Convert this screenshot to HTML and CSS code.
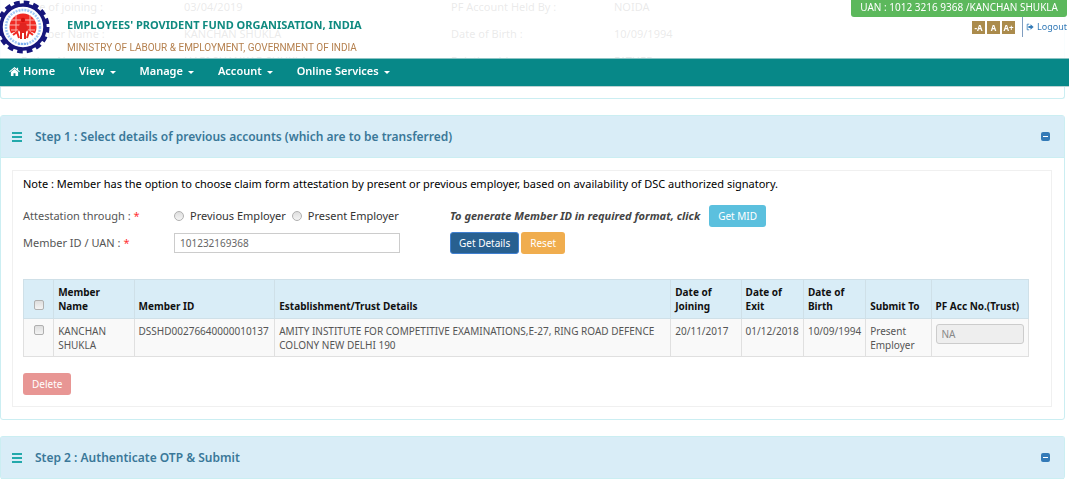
FILE: index.html
```html
<!DOCTYPE html>
<html lang="en">
<head>
    <meta charset="UTF-8">
    <meta name="viewport" content="width=device-width, initial-scale=1.0">
    <title>Transfer Claim | EPFO</title>
    <link rel="stylesheet" href="styles.css">
</head>
<body>
    <header class="site-header">
        <div class="brand-bar">
            <svg class="logo" viewBox="0 0 54 54" aria-label="EPFO">
                <circle cx="27" cy="27" r="24.5" fill="none" stroke="#16167c" stroke-width="4" stroke-dasharray="5.6 4.02"/>
                <circle cx="27" cy="27" r="22" fill="#fff" stroke="#16167c" stroke-width="3.5"/>
                <circle cx="27" cy="27" r="17" fill="none" stroke="#a3caf5" stroke-width="2.5" stroke-dasharray="2 1"/>
                <circle cx="27" cy="27" r="13.5" fill="#f02a24"/>
                <path d="M15 20h24M14 25h26M15 30h24M20 15v17M34 15v17" stroke="#f9b4ae" stroke-width="1" fill="none"/>
                <path d="M14 34q6-4 13-2q7-2 13 2q-4 8-13 8t-13-8z" fill="#fff"/>
                <circle cx="27" cy="20" r="2.2" fill="#d3120f"/>
                <path d="M24 23h6l2 7-2 1v8h-2v-6h-2v6h-2v-8l-2-1z" fill="#e02420"/>
                <path d="M17 35l4-3 2 6M37 35l-4-3-2 6" stroke="#f02a24" stroke-width="2" fill="none"/>
                <path d="M22 44h10" stroke="#7fb0ee" stroke-width="2" stroke-dasharray="2 1"/>
            </svg>
            <div class="brand-text">
                <h1>EMPLOYEES' PROVIDENT FUND ORGANISATION, INDIA</h1>
                <p>MINISTRY OF LABOUR &amp; EMPLOYMENT, GOVERNMENT OF INDIA</p>
            </div>
            <div class="user-area">
                <div class="uan">UAN : 1012 3216 9368 /KANCHAN SHUKLA</div>
                <div class="tools">
                    <button type="button" class="font-btn">-A</button>
                    <button type="button" class="font-btn">A</button>
                    <button type="button" class="font-btn">A+</button>
                    <a href="#" class="logout">
                        <svg width="8" height="8" viewBox="0 0 10 9"><path d="M4 1H1.5v7H4" fill="none" stroke="currentColor"/><path d="M3 3.3h2.6V1L9.6 4.5 5.6 8V5.7H3z" fill="currentColor"/></svg>
                        Logout
                    </a>
                </div>
            </div>
        </div>
        <nav class="main-nav">
            <a href="#"><svg width="11" height="9" viewBox="0 0 12 10"><path d="M6 0l2.6 2.2V.8h1.4v2.6L12 5l-.7.8L6 1.6.7 5.8 0 5z" fill="currentColor"/><path d="M6 2.2l4 3.4V10H7.1V7H4.9v3H2V5.6z" fill="currentColor"/></svg> Home</a>
            <a href="#">View <span class="caret"></span></a>
            <a href="#">Manage <span class="caret"></span></a>
            <a href="#">Account <span class="caret"></span></a>
            <a href="#">Online Services <span class="caret"></span></a>
        </nav>
    </header>

    <main>
        <section class="panel member-details">
            <dl>
                <dt>Date of joining :</dt><dd>03/04/2019</dd>
                <dt>PF Account Held By :</dt><dd>NOIDA</dd>
                <dt>Member Name :</dt><dd>KANCHAN SHUKLA</dd>
                <dt>Date of Birth :</dt><dd>10/09/1994</dd>
                <dt>Father Name :</dt><dd>HARI SHANKAR SHUKLA</dd>
                <dt>Relationship :</dt><dd>FATHER</dd>
            </dl>
        </section>

        <section class="panel">
            <div class="panel-heading">
                <svg class="bars" width="10" height="10" viewBox="0 0 10 10"><path d="M0 1h10M0 5h10M0 9h10" stroke="currentColor" stroke-width="2"/></svg>
                <h2>Step 1 : Select details of previous accounts (which are to be transferred)</h2>
                <button type="button" class="collapse" aria-label="Collapse step 1"></button>
            </div>
            <div class="panel-body">
                <form class="box">
                    <p class="note">Note : Member has the option to choose claim form attestation by present or previous employer, based on availability of DSC authorized signatory.</p>
                    <div class="form-row">
                        <span class="label">Attestation through : <span class="required">*</span></span>
                        <div class="radios">
                            <label><input type="radio" name="employer"> Previous Employer</label>
                            <label><input type="radio" name="employer"> Present Employer</label>
                        </div>
                        <div class="actions">
                            <em class="hint">To generate Member ID in required format, click</em>
                            <button type="button" class="btn btn-info">Get MID</button>
                        </div>
                    </div>
                    <div class="form-row">
                        <label class="label" for="member-id">Member ID / UAN : <span class="required">*</span></label>
                        <input type="text" id="member-id" class="text-input" value="101232169368">
                        <div class="actions">
                            <button type="button" class="btn btn-primary">Get Details</button>
                            <button type="reset" class="btn btn-warning">Reset</button>
                        </div>
                    </div>

                    <table>
                        <colgroup>
                            <col class="col-check">
                            <col class="col-name">
                            <col class="col-id">
                            <col>
                            <col class="col-joining">
                            <col class="col-date">
                            <col class="col-date">
                            <col class="col-submit">
                            <col class="col-acc">
                        </colgroup>
                        <thead>
                            <tr>
                                <th class="check"><input type="checkbox" aria-label="Select all"></th>
                                <th>Member Name</th>
                                <th>Member ID</th>
                                <th>Establishment/Trust Details</th>
                                <th>Date of Joining</th>
                                <th>Date of Exit</th>
                                <th>Date of Birth</th>
                                <th>Submit To</th>
                                <th>PF Acc No.(Trust)</th>
                            </tr>
                        </thead>
                        <tbody>
                            <tr>
                                <td class="check"><input type="checkbox" aria-label="Select row"></td>
                                <td>KANCHAN SHUKLA</td>
                                <td>DSSHD00276640000010137</td>
                                <td>AMITY INSTITUTE FOR COMPETITIVE EXAMINATIONS,E-27, RING ROAD DEFENCE COLONY NEW DELHI 190</td>
                                <td>20/11/2017</td>
                                <td>01/12/2018</td>
                                <td>10/09/1994</td>
                                <td>Present Employer</td>
                                <td><input type="text" class="acc-input" value="NA" aria-label="PF account number" disabled></td>
                            </tr>
                        </tbody>
                    </table>
                    <button type="button" class="btn btn-danger" disabled>Delete</button>
                </form>
            </div>
        </section>

        <section class="panel panel-last">
            <div class="panel-heading">
                <svg class="bars" width="10" height="10" viewBox="0 0 10 10"><path d="M0 1h10M0 5h10M0 9h10" stroke="currentColor" stroke-width="2"/></svg>
                <h2>Step 2 : Authenticate OTP &amp; Submit</h2>
                <button type="button" class="collapse" aria-label="Collapse step 2"></button>
            </div>
        </section>
    </main>
</body>
</html>
```
FILE: styles.css
```css
* {
    box-sizing: border-box;
}
body {
    font-family: 'Noto Sans', 'Open Sans', sans-serif;
    font-size: 11px;
    line-height: 14px;
    margin: 0;
    color: #555;
    background: #fff;
}
button, input {
    font-family: inherit;
    font-size: inherit;
    line-height: inherit;
    margin: 0;
}
h1, h2, p, dl, dd {
    margin: 0;
}

/* header stays over the scrolled page */
.site-header {
    position: fixed;
    top: 0;
    left: 0;
    right: 0;
    z-index: 10;
}
.brand-bar {
    display: flex;
    height: 58px;
    background: rgba(255, 255, 255, 0.88);
}
.logo {
    width: 54px;
    height: 54px;
    margin-left: -4px;
}
.brand-text {
    flex: 1;
    padding: 16px 0 0 17px;
}
.brand-text h1 {
    font-size: 11px;
    line-height: 18px;
    color: #0f8a80;
}
.brand-text p {
    font-family: Roboto, 'Noto Sans', sans-serif;
    font-size: 10px;
    line-height: 28px;
    color: #b5814f;
}
.user-area {
    display: flex;
    flex-direction: column;
    align-items: flex-end;
    padding-right: 2px;
}
.uan {
    height: 17px;
    padding: 0 9px;
    font-size: 10px;
    line-height: 15px;
    color: #fff;
    background: #5cb85c;
    border-radius: 0 0 3px 3px;
}
.tools {
    display: flex;
    align-items: center;
    gap: 2px;
    height: 20px;
}
.font-btn {
    width: 13px;
    height: 13px;
    padding: 0;
    font-size: 8px;
    line-height: 13px;
    font-weight: 700;
    color: #fff;
    background: #ab8b4c;
    border: 0;
}
.logout {
    display: flex;
    align-items: center;
    gap: 3px;
    height: 20px;
    margin-left: 5px;
    padding-left: 3px;
    font-size: 9px;
    color: #337ab7;
    text-decoration: none;
    border-left: 1px solid #7f9dc0;
}
.main-nav {
    display: flex;
    gap: 24px;
    height: 29px;
    padding-left: 9px;
    background: #078888;
    border-top: 1px solid #8cc4c4;
    border-bottom: 1px solid #bcd3d3;
}
.main-nav a {
    display: flex;
    align-items: center;
    gap: 3px;
    padding-bottom: 3px;
    font-weight: 600;
    color: #fff;
    text-decoration: none;
}
.caret {
    margin: 2px 0 0 2px;
    border: 3px solid transparent;
    border-top-color: #fff;
    border-bottom: 0;
}

.panel {
    margin: 0 4px 16px 0;
    border: 1px solid #cbeef2;
    border-radius: 3px;
}
.member-details {
    height: 99px;
    border-top: 0;
    border-radius: 0 0 3px 3px;
}
.member-details dl {
    display: grid;
    grid-template-columns: 163px 267px 163px 1fr;
    row-gap: 13px;
    padding: 0 0 0 20px;
}
.panel-heading {
    display: flex;
    align-items: center;
    gap: 13px;
    height: 42px;
    padding: 0 14px 0 11px;
    background: #d9edf7;
    border-bottom: 1px solid #cbeef2;
}
.panel-heading h2 {
    flex: 1;
    font-size: 12px;
    font-weight: 600;
    line-height: 14px;
    color: #3a7899;
}
.bars {
    color: #23a9ab;
}
.collapse {
    display: flex;
    align-items: center;
    justify-content: center;
    width: 9px;
    height: 9px;
    padding: 0;
    background: #337ab7;
    border: 0;
    border-radius: 2px;
}
.collapse::before {
    content: "";
    width: 5px;
    height: 1px;
    background: #fff;
}
.panel-body {
    padding: 12px 12px 12px 11px;
}
.panel-last {
    margin-bottom: 0;
    border-bottom: 0;
}

.box {
    padding: 6px 22px 11px 10px;
    border: 1px solid #f0f0f0;
}
.note {
    margin-bottom: 11px;
    color: #000;
}
.form-row {
    display: grid;
    grid-template-columns: 151px 276px 1fr;
    align-items: center;
    height: 27px;
}
.required {
    color: #f33;
}
.radios {
    display: flex;
    gap: 6px;
    color: #333;
}
.radios label {
    display: flex;
    align-items: center;
    gap: 6px;
}
input[type="radio"], input[type="checkbox"] {
    appearance: none;
    width: 10px;
    height: 10px;
    background: linear-gradient(#dedede, #f4f4f4);
    border: 1px solid #b0b0b0;
    border-radius: 2px;
}
input[type="radio"] {
    border-radius: 50%;
}
.text-input {
    width: 226px;
    height: 20px;
    padding: 0 5px;
    font-size: 10px;
    color: #666;
    border: 1px solid #ccc;
}
.actions {
    display: flex;
    align-items: center;
    gap: 2px;
}
.hint {
    margin-right: 7px;
    font-weight: 700;
    color: #444;
}
.btn {
    height: 22px;
    padding: 0 8px;
    font-size: 10px;
    color: #fff;
    border: 1px solid transparent;
    border-radius: 3px;
}
.btn-info {
    background: #5bc0de;
}
.btn-primary {
    background: #286090;
    border-color: #3f7fd0;
}
.btn-warning {
    background: #f0ad4e;
}
.btn-danger {
    background: #e89694;
}

table {
    width: 100%;
    margin: 23px 0 16px;
    font-size: 10px;
    table-layout: fixed;
    border-collapse: collapse;
}
.col-check {
    width: 3%;
}
.col-name {
    width: 8%;
}
.col-id {
    width: 14%;
}
.col-joining {
    width: 7%;
}
.col-date {
    width: 6.2%;
}
.col-submit {
    width: 6.5%;
}
.col-acc {
    width: 9.7%;
}
th, td {
    padding: 5px 4px 4px;
    text-align: left;
    vertical-align: top;
    border: 1px solid #e0e0e0;
}
th {
    padding-bottom: 5px;
    vertical-align: bottom;
    color: #111;
    background: #d9edf7;
    border-color: #cfe0e8;
}
td {
    background: #f9f9f9;
}
.check {
    text-align: center;
}
.acc-input {
    width: 100%;
    height: 20px;
    padding: 0 5px;
    color: #888;
    background: #eee;
    border: 1px solid #ccc;
    border-radius: 3px;
}
```
